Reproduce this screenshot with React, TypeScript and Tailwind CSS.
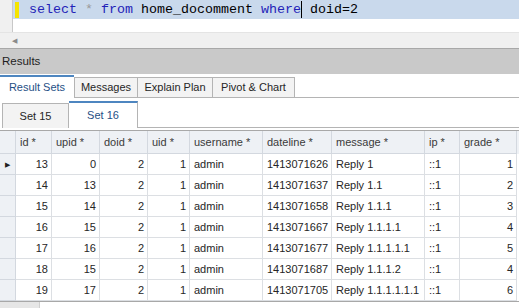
import React from 'react'

const cols = [
  { name: '', w: 16 },
  { name: 'id *', w: 36, right: true },
  { name: 'upid *', w: 48, right: true },
  { name: 'doid *', w: 48, right: true },
  { name: 'uid *', w: 42, right: true },
  { name: 'username *', w: 73 },
  { name: 'dateline *', w: 69 },
  { name: 'message *', w: 93 },
  { name: 'ip *', w: 35 },
  { name: 'grade *', w: 57, right: true },
]

const rows = [
  ['13', '0', '2', '1', 'admin', '1413071626', 'Reply 1', '::1', '1'],
  ['14', '13', '2', '1', 'admin', '1413071637', 'Reply 1.1', '::1', '2'],
  ['15', '14', '2', '1', 'admin', '1413071658', 'Reply 1.1.1', '::1', '3'],
  ['16', '15', '2', '1', 'admin', '1413071667', 'Reply 1.1.1.1', '::1', '4'],
  ['17', '16', '2', '1', 'admin', '1413071677', 'Reply 1.1.1.1.1', '::1', '5'],
  ['18', '15', '2', '1', 'admin', '1413071687', 'Reply 1.1.1.2', '::1', '4'],
  ['19', '17', '2', '1', 'admin', '1413071705', 'Reply 1.1.1.1.1.1', '::1', '6'],
]

const gridCols = 'grid grid-cols-[16px_36px_48px_48px_42px_73px_69px_93px_35px_57px]'

const App: React.FC = () => {
  return (
    <div className="w-[519px] h-[308px] overflow-hidden bg-white text-[11px] text-[#262626] flex flex-col" style={{ fontFamily: '"Liberation Sans", Arial, sans-serif' }}>
      {/* SQL editor */}
      <div className="h-[32px] flex">
        <div className="w-[13px] bg-[#f0f0f0] border-r border-[#c8c8c8]" />
        <div className="flex-1 flex flex-col">
          <div className="h-[19px] flex items-center bg-[#c9d9ec]">
            <div className="w-[4px] h-[16px] ml-[2px] bg-[#f5e400]" />
            <div className="ml-[10px] flex items-center whitespace-pre text-[13.33px] leading-none" style={{ fontFamily: '"Liberation Mono", "Courier New", monospace' }}>
              <span className="text-[#2323b8]">select</span>
              <span className="text-[#9a9a9a]"> * </span>
              <span className="text-[#2323b8]">from</span>
              <span className="text-black"> home_docomment </span>
              <span className="text-[#2323b8]">where</span>
              <span className="w-px h-[17px] bg-black" />
              <span className="text-black"> doid=2</span>
            </div>
          </div>
          <div className="flex-1" />
        </div>
      </div>

      {/* horizontal scrollbar */}
      <div className="h-[16px] bg-[#f0f0f0] border-t border-[#e4e4e4] flex items-center">
        <span className="ml-[12px] text-[7px] text-[#8a8a8a] leading-none">◀</span>
      </div>
      <div className="h-px bg-[#a8a8a8]" />

      {/* Results bar */}
      <div className="h-[25px] bg-[#c9c9c9] flex items-center pl-[2px] text-[11.5px] text-[#1e1e1e]">Results</div>

      {/* main tabs */}
      <div className="h-[24px] flex items-end">
        <div className="h-[23px] w-[74px] bg-white border-t-2 border-[#4e86c0] flex items-center justify-center text-[#1f4f86]">Result Sets</div>
        <div className="h-[21px] w-[64px] bg-[#f3f3f3] border border-[#b4b4b4] flex items-center justify-center">Messages</div>
        <div className="h-[21px] w-[75px] bg-[#f3f3f3] border border-l-0 border-[#b4b4b4] flex items-center justify-center">Explain Plan</div>
        <div className="h-[21px] w-[82px] bg-[#f3f3f3] border border-l-0 border-[#b4b4b4] flex items-center justify-center">Pivot &amp; Chart</div>
        <div className="flex-1 border-b border-[#b4b4b4]" />
      </div>

      {/* sub tabs */}
      <div className="h-[30px] pt-[3px] flex items-end pl-[2px]">
        <div className="h-[25px] w-[67px] bg-[#f3f3f3] border border-b-0 border-[#b4b4b4] flex items-center justify-center">Set 15</div>
        <div className="h-[27px] w-[69px] bg-white border-t-2 border-r border-[#4e86c0] border-r-[#b4b4b4] flex items-center justify-center text-[#1f4f86]">Set 16</div>
        <div className="flex-1 border-b border-[#b4b4b4]" />
      </div>

      {/* data grid */}
      <div className="mt-[2px] border-t border-b border-[#a8a8a8] w-[519px]">
        <div className={`${gridCols} h-[23px] bg-[#eef1f5]`}>
          {cols.map((c, i) => (
            <div key={i} className="border-r border-b border-[#d3d8df] flex items-center pl-[4px] text-[#3a3a3a] whitespace-nowrap">
              {c.name}
            </div>
          ))}
        </div>
        {rows.map((r, ri) => (
          <div key={ri} className={`${gridCols} h-[21px]`}>
            <div className="bg-[#eef1f5] border-r border-b border-[#d3d8df] flex items-center pl-[5px]">
              {ri === 0 && <span className="text-[7px] leading-none text-[#222]">▶</span>}
            </div>
            {r.map((v, ci) => (
              <div
                key={ci}
                className={`border-r border-b border-[#dcdfe3] flex items-center whitespace-nowrap overflow-hidden ${cols[ci + 1].right ? 'justify-end pr-[3px]' : 'pl-[4px]'}`}
              >
                {v}
              </div>
            ))}
          </div>
        ))}
      </div>
      <div className="flex-1 flex">
        <div className="w-[40px] bg-[#e6e6e6] border-r border-[#cfcfcf]" />
      </div>
    </div>
  )
}

export default App
